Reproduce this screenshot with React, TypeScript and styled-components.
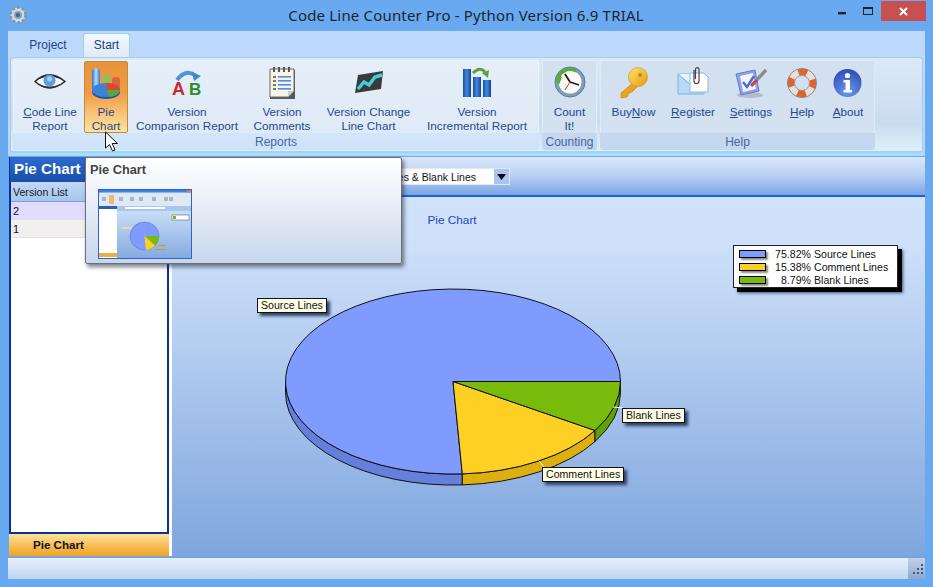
import React from "react";
import styled, { createGlobalStyle } from "styled-components";

const UI_FONT = `"Liberation Sans", "Noto Sans", sans-serif`;

const GlobalStyle = createGlobalStyle`
  html, body {
    margin: 0;
    padding: 0;
    overflow: hidden;
    background: #68a9ef;
  }
`;

const Window = styled.div`
  position: relative;
  width: 933px;
  height: 587px;
  display: flex;
  flex-direction: column;
  background: #68a9ef;
  font-family: ${UI_FONT};
  overflow: hidden;
`;

const TitleBar = styled.div`
  height: 31px;
  flex: none;
  display: grid;
  grid-template-columns: 1fr auto 1fr;
  align-items: start;
`;

const TitleIcon = styled.div`
  padding: 6px 0 0 9px;
  line-height: 0;
`;

const Title = styled.div`
  font-family: "Noto Sans", sans-serif;
  font-size: 15px;
  line-height: 30px;
  color: #1c2530;
  letter-spacing: 0.18px;
  margin-left: -1px;
`;

const Controls = styled.div`
  justify-self: end;
  display: flex;
  align-items: flex-start;
  padding: 1px 7px 0 0;
`;

const ControlButton = styled.div<{ $close?: boolean }>`
  width: ${(p) => (p.$close ? "45px" : "26px")};
  height: 20px;
  display: flex;
  align-items: center;
  justify-content: center;
  background: ${(p) => (p.$close ? "#c75050" : "transparent")};
`;

const Frame = styled.div`
  flex: 1;
  min-height: 0;
  display: flex;
  flex-direction: column;
  padding: 0 8px 8px;
`;

const Ribbon = styled.div`
  flex: none;
  height: 125px;
  background: linear-gradient(#bddafc, #b7d6fb);
  padding: 0 2px;
  box-sizing: border-box;
`;

const TabRow = styled.div`
  height: 26px;
  display: flex;
  align-items: flex-end;
  padding-left: 14px;
  gap: 11px;
`;

const Tab = styled.div<{ $w: number; $active?: boolean }>`
  width: ${(p) => p.$w}px;
  height: 24px;
  box-sizing: border-box;
  text-align: center;
  font-size: 12px;
  line-height: 25px;
  color: #1f3f8f;
  border-radius: 3px 3px 0 0;
  ${(p) =>
    p.$active &&
    `
    background: linear-gradient(#f2f8fe, #dfebf8);
    border: 1px solid #a9cdf0;
    border-bottom: none;
    line-height: 23px;
    color: #20407f;
  `}
`;

const RibbonBody = styled.div`
  height: 96px;
  box-sizing: border-box;
  display: flex;
  gap: 3px;
  padding: 2px;
  border: 1px solid #a8cbee;
  border-bottom: 2px solid #8fdcf2;
  border-radius: 4px;
  background: linear-gradient(#dce8f6, #cbdcf0 70%, #dff0fb);
`;

const Group = styled.div<{ $w: number; $soft?: boolean }>`
  width: ${(p) => p.$w}px;
  height: 90px;
  flex: none;
  display: flex;
  flex-direction: column;
  border-radius: 3px;
  overflow: hidden;
  box-shadow: inset 0 0 0 1px rgba(255, 255, 255, 0.35);
  background: ${(p) =>
    p.$soft
      ? "linear-gradient(#e6eff9, #dde9f6)"
      : "linear-gradient(#d2e0f0, #d3e1f1)"};
`;

const GroupButtons = styled.div<{ $pl: number }>`
  height: 73px;
  padding: 1px 0 0 ${(p) => p.$pl}px;
  box-sizing: border-box;
  display: flex;
`;

const GroupCaption = styled.div<{ $soft?: boolean }>`
  flex: 1;
  text-align: center;
  font-size: 12px;
  line-height: 19px;
  color: #46689f;
  background: ${(p) =>
    p.$soft
      ? "linear-gradient(#d3e5f9, #cde1f8)"
      : "linear-gradient(#c5d8ee, #c2d6ee)"};
`;

const RibbonButton = styled.div<{ $w: number; $hot?: boolean }>`
  width: ${(p) => p.$w}px;
  height: 72px;
  flex: none;
  box-sizing: border-box;
  padding-top: 4px;
  text-align: center;
  font-size: 11.75px;
  line-height: 14px;
  color: #24498c;
  white-space: nowrap;
  ${(p) =>
    p.$hot &&
    `
    padding-top: 3px;
    border: 1px solid #c08c3c;
    border-radius: 2px;
    background: linear-gradient(#e8923a, #f19c42 45%, #f8c57c 75%, #fde3a2);
  `}
`;

const ButtonIcon = styled.div`
  height: 36px;
  margin-bottom: 4px;
  display: flex;
  justify-content: center;
`;

const Main = styled.div`
  flex: 1;
  min-height: 0;
  display: flex;
  padding: 1px 0 1px 1px;
`;

const SidePanel = styled.div`
  width: 160px;
  flex: none;
  box-sizing: border-box;
  display: flex;
  flex-direction: column;
  border-left: 2px solid #0a2e9c;
  border-right: 2px solid #0a2e9c;
  background: #fff;
`;

const SideHeader = styled.div`
  height: 25px;
  margin-left: -1px;
  padding-left: 4px;
  color: #fff;
  font-size: 15.2px;
  font-weight: 700;
  line-height: 24px;
  background: linear-gradient(#2e6bd0, #174ea8);
`;

const ListHeader = styled.div`
  height: 20px;
  box-sizing: border-box;
  padding-left: 2px;
  font-size: 10.6px;
  line-height: 20px;
  color: #1a1a1a;
  background: linear-gradient(#c2d8f5, #a6c5ee);
  border-bottom: 1px solid #7f9fd0;
`;

const ListRow = styled.div<{ $selected?: boolean }>`
  height: ${(p) => (p.$selected ? 18 : 17)}px;
  padding-left: 2px;
  font-size: 11px;
  line-height: 18px;
  color: #111;
  background: ${(p) => (p.$selected ? "#e1dcfd" : "#f1f0ee")};
  border-bottom: ${(p) => (p.$selected ? "none" : "1px solid #dfe3ee")};
`;

const ListSpace = styled.div`
  flex: 1;
`;

const SideFooter = styled.div`
  height: 24px;
  box-sizing: border-box;
  border-top: 2px solid #0a2e9c;
  margin: 0 -2px;
  padding-left: 24px;
  font-size: 11.6px;
  font-weight: 700;
  line-height: 21px;
  color: #141414;
  background: linear-gradient(#fde29a, #f6b94f 60%, #f2a225);
`;

const Splitter = styled.div`
  width: 3px;
  flex: none;
  background: #fff;
`;

const Content = styled.div`
  flex: 1;
  min-width: 0;
  display: flex;
  flex-direction: column;
`;

const ChartToolbar = styled.div`
  height: 40px;
  flex: none;
  box-sizing: border-box;
  padding: 11px 0 0 78px;
  border-bottom: 2px solid #1b62d2;
  background: linear-gradient(#dce8fa, #b8d0f2 50%, #79a5e6);
`;

const Combo = styled.div`
  width: 260px;
  height: 17px;
  box-sizing: border-box;
  display: flex;
  justify-content: flex-end;
  align-items: center;
  border: 1px solid #dfe8f6;
  background: #fff;
  overflow: hidden;
`;

const ComboText = styled.div`
  font-size: 10.5px;
  color: #111;
  white-space: nowrap;
  padding-right: 18px;
`;

const ComboArrow = styled.div`
  width: 15px;
  height: 15px;
  flex: none;
  display: flex;
  align-items: center;
  justify-content: center;
  background: #a9c5f2;
`;

const ChartCanvas = styled.div`
  position: relative;
  flex: 1;
  background: linear-gradient(#d1e3fb, #cfe1fa 12%, #7fa6de);
`;

const ChartTitle = styled.div`
  position: absolute;
  left: 0;
  width: 560px;
  top: 16px;
  text-align: center;
  font-size: 11.8px;
  line-height: 14px;
  color: #1c46b8;
`;

const PieSvg = styled.svg`
  position: absolute;
  left: 108px;
  top: 88px;
`;

const Legend = styled.div`
  position: absolute;
  left: 561px;
  top: 48px;
  width: 165px;
  height: 43px;
  box-sizing: border-box;
  padding: 1px 0 0 5px;
  background: #fff;
  border: 1px solid #222;
  box-shadow: 4px 4px 0 #000, 5px 5px 3px #35507a;
`;

const LegendRow = styled.div`
  height: 13px;
  display: flex;
  align-items: center;
  font-size: 10.6px;
  color: #111;
  white-space: nowrap;
`;

const LegendSwatch = styled.div<{ $color: string }>`
  width: 27px;
  height: 8px;
  box-sizing: border-box;
  border: 1px solid #000;
  background: ${(p) => p.$color};
  box-shadow: 2px 2px 2px #8a8a8a;
`;

const LegendPct = styled.div`
  width: 36px;
  margin-left: 9px;
  text-align: right;
`;

const LegendName = styled.div`
  margin-left: 3px;
`;

const PieLabel = styled.div<{ $x: number; $y: number }>`
  position: absolute;
  left: ${(p) => p.$x}px;
  top: ${(p) => p.$y}px;
  padding: 0 3px;
  height: 15px;
  box-sizing: border-box;
  font-size: 10.6px;
  line-height: 13px;
  color: #111;
  white-space: nowrap;
  background: #ffffe6;
  border: 1px solid #111;
  box-shadow: 3px 3px 3px #2c3f66;
`;

const StatusBar = styled.div`
  height: 22px;
  flex: none;
  display: flex;
  justify-content: flex-end;
  background: linear-gradient(#e4eefb, #d9e7f9 40%, #bdd3f0);
  border-top: 1px solid #7ba0d4;
  box-sizing: border-box;
`;

const Grip = styled.div`
  width: 17px;
  background: linear-gradient(#c3d3e8, #8fa8cc);
  line-height: 0;
`;

const Tooltip = styled.div`
  position: absolute;
  left: 85px;
  top: 157px;
  width: 317px;
  height: 107px;
  box-sizing: border-box;
  padding: 4px 0 0 4px;
  border: 1px solid #6c6f76;
  border-radius: 2px;
  background: linear-gradient(#ffffff, #f3f6fb 25%, #c8d6ec);
  box-shadow: 2px 3px 4px rgba(30, 40, 60, 0.6);
`;

const TooltipTitle = styled.div`
  font-size: 12.75px;
  font-weight: 700;
  line-height: 16px;
  color: #454545;
`;

const TooltipThumb = styled.div`
  margin: 11px 0 0 8px;
  line-height: 0;
`;

const Cursor = styled.svg`
  position: absolute;
  left: 104px;
  top: 131px;
`;

const EyeIcon = () => (
  <svg width="36" height="36" viewBox="0 0 36 36">
    <path d="M3 16.5Q17 3 33 16.5Q17 29 3 16.5Z" fill="#f5f5f5" stroke="#2a2a2a" strokeWidth="1.5" />
    <path d="M4 16Q17 3 32 16Q17 7 4 16Z" fill="#222" />
    <path d="M5 18Q17 29 31 18Q17 25 5 18Z" fill="#333" />
    <circle cx="17.5" cy="15.5" r="6" fill="#5b9edb" />
    <circle cx="17.5" cy="14" r="2.5" fill="#a8d2f4" />
  </svg>
);

const PieIcon = () => (
  <svg width="36" height="36" viewBox="0 0 36 36">
    <defs>
      <linearGradient id="pi-b" x1="0" x2="1" y1="0" y2="0">
        <stop offset="0" stopColor="#2f6fd0" />
        <stop offset="0.5" stopColor="#b4dcf8" />
        <stop offset="1" stopColor="#3a78d2" />
      </linearGradient>
    </defs>
    <rect x="4" y="3" width="8" height="25" rx="4" fill="url(#pi-b)" />
    <rect x="15" y="9" width="7" height="15" rx="3" fill="#8cc05a" />
    <rect x="24" y="12" width="8" height="13" rx="3" fill="#d9663a" />
    <ellipse cx="18" cy="27" rx="14" ry="7" fill="#1f55ae" />
    <ellipse cx="18" cy="25" rx="14" ry="7" fill="#3b83d8" />
    <path d="M18 25V18A14 7 0 0 1 32 25Z" fill="#d14a35" />
    <path d="M18 25H32A14 7 0 0 1 22 32Z" fill="#5aa83a" />
  </svg>
);

const AbIcon = () => (
  <svg width="36" height="36" viewBox="0 0 36 36">
    <path d="M8 15Q17 3 27 11" fill="none" stroke="#4f94d8" strokeWidth="4" />
    <path d="M23 7L32 11L25 16Z" fill="#3f86cf" />
    <text x="3" y="30" fontFamily="Liberation Sans, sans-serif" fontSize="18" fontWeight="700" fill="#c92a2a">A</text>
    <text x="20" y="30" fontFamily="Liberation Sans, sans-serif" fontSize="17" fontWeight="700" fill="#2f8a2a">B</text>
  </svg>
);

const NotepadIcon = () => (
  <svg width="36" height="36" viewBox="0 0 36 36">
    <rect x="6" y="5" width="25" height="29" fill="#55585c" />
    <path d="M6 4H30V26L24 32H6Z" fill="#f7f3e6" stroke="#6a6a6a" />
    <path d="M24 32V26H30Z" fill="#cfcfcf" />
    {[9, 14, 19, 24].map((x) => (
      <rect key={x} x={x} y="2" width="2" height="5" fill="#555" />
    ))}
    {[11, 15, 19, 23].map((y) => (
      <g key={y}>
        <rect x="9" y={y} width="3" height="2" fill="#777" />
        <rect x="14" y={y} width="13" height="1.6" fill="#4d8ee0" />
      </g>
    ))}
  </svg>
);

const LineChartIcon = () => (
  <svg width="36" height="36" viewBox="0 0 36 36">
    <path d="M7 10L32 6L30 24L4 28Z" fill="#3c3a38" />
    <path d="M7 24L13 17L18 20L24 12L31 10" fill="none" stroke="#3fd0de" strokeWidth="3.4" />
  </svg>
);

const BarsIcon = () => (
  <svg width="36" height="36" viewBox="0 0 36 36">
    <defs>
      <linearGradient id="bi-b" x1="0" x2="1" y1="0" y2="0">
        <stop offset="0" stopColor="#1d4fa8" />
        <stop offset="0.5" stopColor="#3f8ade" />
        <stop offset="1" stopColor="#173f90" />
      </linearGradient>
    </defs>
    <rect x="4" y="4" width="8" height="28" fill="url(#bi-b)" />
    <rect x="14" y="12" width="8" height="20" fill="url(#bi-b)" />
    <rect x="24" y="15" width="8" height="17" fill="url(#bi-b)" />
    <path d="M14 8Q21 1 26 7" fill="none" stroke="#5ea03c" strokeWidth="3" />
    <path d="M23 8L30 5L29 13Z" fill="#5ea03c" />
  </svg>
);

const ClockIcon = () => (
  <svg width="36" height="36" viewBox="0 0 36 36">
    <circle cx="18" cy="17" r="15" fill="#7d9dba" stroke="#5b7a99" />
    <circle cx="18" cy="17" r="11.5" fill="#fbfbf6" />
    <path d="M6 16A12 12 0 0 1 24 6" fill="none" stroke="#59ab3c" strokeWidth="3.5" />
    <path d="M3 13L10 12L7 20Z" fill="#59ab3c" />
    <path d="M18 17L13 9M18 17L27 20" stroke="#222" strokeWidth="1.8" />
    <path d="M18 17L13 25" stroke="#d33" strokeWidth="1" />
  </svg>
);

const KeyIcon = () => (
  <svg width="36" height="36" viewBox="0 0 36 36">
    <defs>
      <linearGradient id="ki-g" x1="0" x2="1" y1="0" y2="1">
        <stop offset="0" stopColor="#ffe36a" />
        <stop offset="1" stopColor="#e79a12" />
      </linearGradient>
    </defs>
    <path d="M18 17L5 28L5 33L11 32L13 28L16 27L23 20Z" fill="#eda41c" stroke="#c07f10" strokeWidth="0.6" />
    <circle cx="22" cy="12" r="9.5" fill="url(#ki-g)" stroke="#cf8d14" strokeWidth="0.6" />
    <circle cx="24" cy="10" r="2" fill="#b98a2a" />
  </svg>
);

const MailIcon = () => (
  <svg width="36" height="36" viewBox="0 0 36 36">
    <path d="M3 9H29V29H3Z" fill="#b7d8f6" stroke="#7fb0de" />
    <path d="M3 9L16 20L29 9" fill="#e8f4fd" stroke="#7fb0de" />
    <path d="M15 8H29L33 12V27H15Z" fill="#fff" stroke="#8db8e0" />
    <path d="M19 5V16A2.5 2.5 0 0 0 24 16V4A1.8 1.8 0 0 0 20.5 4V14" fill="none" stroke="#444" strokeWidth="1.2" />
  </svg>
);

const SettingsIcon = () => (
  <svg width="36" height="36" viewBox="0 0 36 36">
    <ellipse cx="17" cy="30" rx="13" ry="3" fill="#b4bccb" />
    <path d="M3 9L22 5L26 26L8 30Z" fill="#8f9fe6" stroke="#6a7ccc" />
    <path d="M7 11L20 8L23 24L10 27Z" fill="#f1f5fd" />
    <path d="M10 17L14 22L21 11" fill="none" stroke="#3f6fe0" strokeWidth="2.4" />
    <path d="M19 20L33 5" stroke="#8c8c8c" strokeWidth="3.4" />
    <path d="M18 21L24 15" stroke="#d8404a" strokeWidth="3" />
  </svg>
);

const BuoyIcon = () => (
  <svg width="36" height="36" viewBox="0 0 36 36">
    <circle cx="18" cy="18" r="11" fill="none" stroke="#e4e0da" strokeWidth="7" />
    <circle cx="18" cy="18" r="11" fill="none" stroke="#e3622c" strokeWidth="7" strokeDasharray="8.6 8.7" strokeDashoffset="4" />
    <circle cx="18" cy="18" r="14.5" fill="none" stroke="#8a8a84" strokeWidth="1" />
    <circle cx="18" cy="18" r="7.5" fill="none" stroke="#9a9a94" strokeWidth="1" />
  </svg>
);

const InfoIcon = () => (
  <svg width="36" height="36" viewBox="0 0 36 36">
    <defs>
      <radialGradient id="ii-g" cx="0.5" cy="0.8" r="0.8">
        <stop offset="0" stopColor="#6b9af0" />
        <stop offset="1" stopColor="#2c4cb4" />
      </radialGradient>
    </defs>
    <circle cx="17.5" cy="18" r="14" fill="url(#ii-g)" />
    <circle cx="17.5" cy="10.5" r="2.6" fill="#fff" />
    <path d="M13.5 15H20V25H22V27.5H13.5V25H15.5V17.5H13.5Z" fill="#fff" />
  </svg>
);

const GearIcon = () => (
  <svg width="18" height="18" viewBox="0 0 18 18">
    <circle cx="9" cy="9" r="5.8" fill="none" stroke="#d8d8d8" strokeWidth="3.6" />
    <circle cx="9" cy="9" r="7.4" fill="none" stroke="#8e9094" strokeWidth="2.4" strokeDasharray="2.6 2.2" />
    <circle cx="9" cy="9" r="2.2" fill="#5f6368" />
  </svg>
);

const PieChartDrawing = () => (
  <PieSvg width="350" height="210" viewBox="280 285 350 210">
    <g stroke="#111" strokeWidth="1" strokeLinejoin="round">
      <path d="M285.5 381.5A167.5 92.5 0 0 0 462.3 473.9V484.9A167.5 92.5 0 0 1 285.5 392.5Z" fill="#6480dc" />
      <path d="M462.3 473.9A167.5 92.5 0 0 0 595 430.5V441.5A167.5 92.5 0 0 1 462.3 484.9Z" fill="#deb00f" />
      <path d="M595 430.5A167.5 92.5 0 0 0 620.5 381.5V392.5A167.5 92.5 0 0 1 595 441.5Z" fill="#62a00a" />
      <path d="M453 381.5L620.5 381.5A167.5 92.5 0 1 0 462.3 473.9Z" fill="#7f9bff" />
      <path d="M453 381.5L462.3 473.9A167.5 92.5 0 0 0 595 430.5Z" fill="#fdd023" />
      <path d="M453 381.5L595 430.5A167.5 92.5 0 0 0 620.5 381.5Z" fill="#78bb0a" />
    </g>
    <path d="M613 407L623 408M539 461L545 468" stroke="#fff" strokeWidth="1" />
  </PieSvg>
);

const Thumbnail = () => (
  <svg width="94" height="70" viewBox="0 0 94 70">
    <defs>
      <linearGradient id="th-c" x1="0" x2="0" y1="0" y2="1">
        <stop offset="0" stopColor="#d0e2fa" />
        <stop offset="1" stopColor="#86aae0" />
      </linearGradient>
    </defs>
    <rect x="0.5" y="0.5" width="93" height="69" fill="#dfe9f5" stroke="#2c62d8" />
    <rect x="1" y="1" width="92" height="2.5" fill="#3f7fe0" />
    <rect x="89" y="1" width="4" height="2.5" fill="#d8803a" />
    <rect x="11" y="6" width="5" height="9" fill="#f0b868" />
    {[4, 21, 32, 41, 54, 66, 71].map((x) => (
      <rect key={x} x={x} y="8" width="4" height="4" fill="#a8b6c8" />
    ))}
    <rect x="1" y="17" width="18" height="52" fill="#fff" />
    <rect x="1" y="17" width="18" height="3" fill="#2a5cb8" />
    <rect x="1" y="64" width="18" height="4" fill="#f0b040" />
    <rect x="19" y="17" width="74" height="52" fill="url(#th-c)" />
    <rect x="19" y="17" width="74" height="5" fill="#a9c6ee" />
    <rect x="27" y="18" width="40" height="2" fill="#fff" />
    <rect x="74" y="26" width="17" height="5" fill="#fff" stroke="#555" strokeWidth="0.5" />
    <rect x="75" y="27" width="3" height="3" fill="#78bb0a" />
    <rect x="24" y="38" width="10" height="2" fill="#e9d9a0" />
    <ellipse cx="46.5" cy="47" rx="14.5" ry="14" fill="#7f9bff" stroke="#5a6fc0" strokeWidth="0.5" />
    <path d="M46.5 47L61 47A14.5 14 0 0 1 57 56.5Z" fill="#78bb0a" />
    <path d="M46.5 47L57 56.5A14.5 14 0 0 1 48 61Z" fill="#fdd023" />
    <rect x="60" y="56" width="8" height="1" fill="#c8a030" />
    <rect x="57" y="60" width="12" height="1" fill="#c8a030" />
  </svg>
);

const reportButtons = [
  { w: 68, icon: <EyeIcon />, lines: [<><u>C</u>ode Line</>, "Report"] },
  { w: 44, icon: <PieIcon />, lines: ["Pie", "Chart"], hot: true },
  { w: 118, icon: <AbIcon />, lines: ["Version", "Comparison Report"] },
  { w: 72, icon: <NotepadIcon />, lines: ["Version", "Comments"] },
  { w: 101, icon: <LineChartIcon />, lines: ["Version Change", "Line Chart"] },
  { w: 116, icon: <BarsIcon />, lines: ["Version", "Incremental Report"] },
];

const helpButtons = [
  { w: 55, icon: <KeyIcon />, lines: [<>Buy<u>N</u>ow</>] },
  { w: 64, icon: <MailIcon />, lines: [<><u>R</u>egister</>] },
  { w: 52, icon: <SettingsIcon />, lines: [<><u>S</u>ettings</>] },
  { w: 50, icon: <BuoyIcon />, lines: [<><u>H</u>elp</>] },
  { w: 42, icon: <InfoIcon />, lines: [<><u>A</u>bout</>] },
];

const legendRows = [
  { color: "#7f9bff", pct: "75.82%", name: "Source Lines" },
  { color: "#fdd023", pct: "15.38%", name: "Comment Lines" },
  { color: "#78bb0a", pct: "8.79%", name: "Blank Lines" },
];

type ButtonSpec = {
  w: number;
  icon: React.ReactNode;
  lines: React.ReactNode[];
  hot?: boolean;
};

const ToolButton = ({ w, icon, lines, hot }: ButtonSpec) => (
  <RibbonButton $w={w} $hot={hot}>
    <ButtonIcon>{icon}</ButtonIcon>
    {lines.map((line, i) => (
      <div key={i}>{line}</div>
    ))}
  </RibbonButton>
);

export default function App() {
  return (
    <>
      <GlobalStyle />
      <Window>
        <TitleBar>
          <TitleIcon>
            <GearIcon />
          </TitleIcon>
          <Title>Code Line Counter Pro - Python Version 6.9 TRIAL</Title>
          <Controls>
            <ControlButton>
              <svg width="10" height="10" viewBox="0 0 10 10">
                <rect x="1" y="6" width="8" height="2.4" fill="#222" />
              </svg>
            </ControlButton>
            <ControlButton>
              <svg width="12" height="10" viewBox="0 0 12 10">
                <rect x="1.5" y="1.5" width="9" height="7" fill="none" stroke="#222" />
                <rect x="1" y="1" width="10" height="2" fill="#222" />
              </svg>
            </ControlButton>
            <ControlButton $close>
              <svg width="11" height="11" viewBox="0 0 11 11">
                <path d="M2 2L9 9M9 2L2 9" stroke="#fff" strokeWidth="2" />
              </svg>
            </ControlButton>
          </Controls>
        </TitleBar>
        <Frame>
          <Ribbon>
            <TabRow>
              <Tab $w={48}>Project</Tab>
              <Tab $w={47} $active>
                Start
              </Tab>
            </TabRow>
            <RibbonBody>
              <Group $w={526} $soft>
                <GroupButtons $pl={3}>
                  {reportButtons.map((b, i) => (
                    <ToolButton key={i} {...b} />
                  ))}
                </GroupButtons>
                <GroupCaption $soft>Reports</GroupCaption>
              </Group>
              <Group $w={55}>
                <GroupButtons $pl={0}>
                  <ToolButton w={55} icon={<ClockIcon />} lines={["Count", "It!"]} />
                </GroupButtons>
                <GroupCaption>Counting</GroupCaption>
              </Group>
              <Group $w={275}>
                <GroupButtons $pl={6}>
                  {helpButtons.map((b, i) => (
                    <ToolButton key={i} {...b} />
                  ))}
                </GroupButtons>
                <GroupCaption>Help</GroupCaption>
              </Group>
            </RibbonBody>
          </Ribbon>
          <Main>
            <SidePanel>
              <SideHeader>Pie Chart</SideHeader>
              <ListHeader>Version List</ListHeader>
              <ListRow $selected>2</ListRow>
              <ListRow>1</ListRow>
              <ListSpace />
              <SideFooter>Pie Chart</SideFooter>
            </SidePanel>
            <Splitter />
            <Content>
              <ChartToolbar>
                <Combo>
                  <ComboText>Source Lines &amp; Comment Lines &amp; Blank Lines</ComboText>
                  <ComboArrow>
                    <svg width="9" height="6" viewBox="0 0 9 6">
                      <path d="M0 0H9L4.5 6Z" fill="#000" />
                    </svg>
                  </ComboArrow>
                </Combo>
              </ChartToolbar>
              <ChartCanvas>
                <ChartTitle>Pie Chart</ChartTitle>
                <PieChartDrawing />
                <Legend>
                  {legendRows.map((r) => (
                    <LegendRow key={r.name}>
                      <LegendSwatch $color={r.color} />
                      <LegendPct>{r.pct}</LegendPct>
                      <LegendName>{r.name}</LegendName>
                    </LegendRow>
                  ))}
                </Legend>
                <PieLabel $x={85} $y={101}>Source Lines</PieLabel>
                <PieLabel $x={450} $y={211}>Blank Lines</PieLabel>
                <PieLabel $x={370} $y={270}>Comment Lines</PieLabel>
              </ChartCanvas>
            </Content>
          </Main>
          <StatusBar>
            <Grip>
              <svg width="17" height="21" viewBox="0 0 17 21">
                {[
                  [13, 6],
                  [9, 10],
                  [13, 10],
                  [5, 14],
                  [9, 14],
                  [13, 14],
                ].map(([x, y]) => (
                  <rect key={`${x}-${y}`} x={x} y={y} width="2" height="2" fill="#3f5a80" />
                ))}
              </svg>
            </Grip>
          </StatusBar>
        </Frame>
        <Tooltip>
          <TooltipTitle>Pie Chart</TooltipTitle>
          <TooltipThumb>
            <Thumbnail />
          </TooltipThumb>
        </Tooltip>
        <Cursor width="16" height="22" viewBox="0 0 16 22">
          <path d="M1.5 1V17L5.5 13.5L8.5 20L11 19L8.2 12.5H13.5Z" fill="#fff" stroke="#111" strokeWidth="1" />
        </Cursor>
      </Window>
    </>
  );
}
